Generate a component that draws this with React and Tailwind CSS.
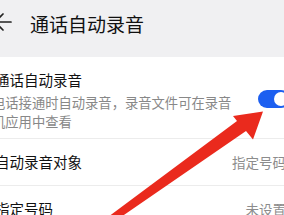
import React from 'react';

const font = { fontFamily: '"Noto Sans CJK SC", "Noto Sans", sans-serif' };

function BackArrow() {
    return (
        <svg width="24" height="24" viewBox="0 0 24 24" className="-ml-[12px] shrink-0">
            <path d="M7 10 H23 M7 10 L15 2 M7 10 L15 18" stroke="#222" strokeWidth="1.7" fill="none" strokeLinecap="round" />
        </svg>
    );
}

function Toggle() {
    return (
        <div className="flex h-[18px] w-[32px] shrink-0 items-center justify-end rounded-full bg-[#1c5ff0] pr-[2px]">
            <div className="size-[14px] rounded-full bg-white" />
        </div>
    );
}

function Row({ label, value }) {
    return (
        <div className="flex h-[47px] items-center justify-between border-b border-[#ececec] last:border-b-0">
            <span className="-ml-[5px] text-[14.5px] leading-[20px] text-[#111]">{label}</span>
            <span className="-mr-[2px] text-[13.5px] leading-[20px] text-[#8c8c8c]">{value}</span>
        </div>
    );
}

export default function App() {
    return (
        <div className="relative h-[215px] w-[284px] overflow-hidden bg-white" style={font}>
            {/* Header */}
            <div className="flex h-[57px] items-start bg-[#f0f0f2] pt-[12px]">
                <div className="flex items-center">
                    <BackArrow />
                    <span className="ml-[18px] text-[19px] leading-[24px] text-[#111]">通话自动录音</span>
                </div>
            </div>

            {/* Auto record switch */}
            <div className="flex items-center justify-between border-b border-[#ececec] pb-[7px] pt-[13px]">
                <div className="flex flex-col">
                    <span className="-ml-[5px] text-[14.5px] leading-[20px] text-[#111]">通话自动录音</span>
                    <p className="-ml-[8px] mt-[3px] w-[242px] text-[13.3px] leading-[19px] text-[#888]">
                        电话接通时自动录音，录音文件可在录音机应用中查看
                    </p>
                </div>
                <div className="-mr-[6px] -mt-[4px]">
                    <Toggle />
                </div>
            </div>

            <Row label="自动录音对象" value="指定号码" />
            <Row label="指定号码" value="未设置" />

            {/* Red annotation arrow */}
            <svg className="absolute inset-0" width="284" height="215" viewBox="0 0 284 215">
                <polygon
                    points="263,111.5 233,116 237,121 108,217 121,217 246,131 253,139.5"
                    fill="#ea2a1d"
                />
            </svg>
        </div>
    );
}
